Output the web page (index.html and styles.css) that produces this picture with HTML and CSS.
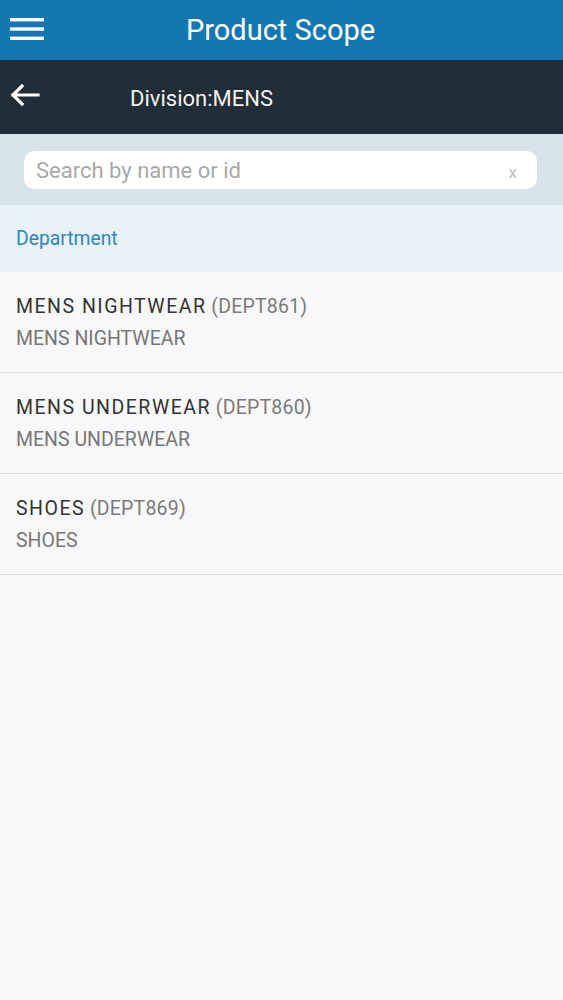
FILE: index.html
```html
<!DOCTYPE html>
<html>
<head>
<meta charset="utf-8">
<link rel="stylesheet" href="styles.css">
</head>
<body>
<div class="app">
  <header class="topbar">
    <svg class="menu" width="34" height="24" viewBox="0 0 34 24"><rect x="0" y="1" width="34" height="3.4" fill="#fff"/><rect x="0" y="10.3" width="34" height="3.4" fill="#fff"/><rect x="0" y="19.6" width="34" height="3.4" fill="#fff"/></svg>
    <h1 class="title">Product Scope</h1>
  </header>
  <div class="subbar">
    <svg class="back" width="30" height="22" viewBox="0 0 30 22"><path d="M28 11H3M12 2L3 11L12 20" fill="none" stroke="#fff" stroke-width="3.2" stroke-linecap="square"/></svg>
    <span class="division">Division:MENS</span>
  </div>
  <div class="searchwrap">
    <div class="search">
      <span class="placeholder">Search by name or id</span>
      <span class="clear">x</span>
    </div>
  </div>
  <div class="section">Department</div>
  <ul class="list">
    <li class="item">
      <div class="name"><span class="strong">MENS NIGHTWEAR</span> <span class="id">(DEPT861)</span></div>
      <div class="desc">MENS NIGHTWEAR</div>
    </li>
    <li class="item">
      <div class="name"><span class="strong">MENS UNDERWEAR</span> <span class="id">(DEPT860)</span></div>
      <div class="desc">MENS UNDERWEAR</div>
    </li>
    <li class="item">
      <div class="name"><span class="strong">SHOES</span> <span class="id">(DEPT869)</span></div>
      <div class="desc">SHOES</div>
    </li>
  </ul>
</div>
</body>
</html>
```
FILE: styles.css
```css
* { box-sizing: border-box; }
html, body { margin: 0; padding: 0; }
body {
  font-family: Roboto, "Liberation Sans", sans-serif;
  background: #f8f8fa;
  width: 563px;
  height: 1000px;
  overflow: hidden;
}
.app { display: flex; flex-direction: column; }
.topbar {
  height: 60px;
  background: #1577b2;
  display: flex;
  align-items: center;
  position: relative;
}
.menu { position: absolute; left: 10px; top: 17px; }
.title {
  margin: 0;
  width: 100%;
  text-align: center;
  color: #fff;
  font-weight: 400;
  font-size: 29px;
  transform: translateX(-1px);
}
.subbar {
  height: 74px;
  background: #212d37;
  display: flex;
  align-items: center;
  padding-left: 10px;
  padding-top: 2px;
}
.back { margin-right: 90px; margin-top: -6px; }
.division { color: #f2f2f2; font-size: 22px; }
.searchwrap {
  height: 71px;
  background: #d6e3ea;
  padding: 17px 26px 0 24px;
}
.search {
  height: 38px;
  background: #fff;
  border-radius: 10px;
  display: flex;
  align-items: center;
  justify-content: space-between;
  padding: 0 20px 0 12px;
}
.placeholder { color: #a9a9a9; font-size: 22px; }
.clear { color: #bdbdbd; font-size: 17px; margin-top: 4px; }
.section {
  height: 67px;
  background: #e9f2f7;
  color: #2a87bf;
  font-size: 19.3px;
  display: flex;
  align-items: center;
  padding-left: 16px;
}
.list { list-style: none; margin: 0; padding: 0; }
.item {
  height: 101px;
  border-bottom: 1.5px solid #dcdcdc;
  padding: 23px 16px 0 16px;
  background: #f8f8fa;
}
.name { font-size: 19.5px; line-height: 24px; }
.strong { color: #333; letter-spacing: 1.5px; }
.id { color: #7a7a7a; letter-spacing: 0.2px; }
.desc { margin-top: 8px; font-size: 19.5px; color: #777; line-height: 24px; }
```
